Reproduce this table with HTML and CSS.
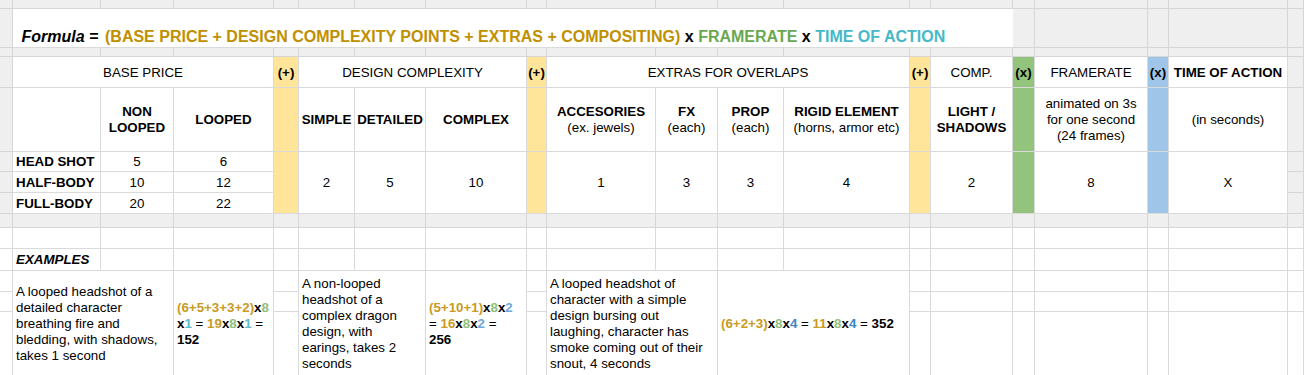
FILE: index.html
```html
<!DOCTYPE html>
<html lang="en">
<head>
<meta charset="utf-8">
<title>Pricing formula</title>
<link rel="stylesheet" href="styles.css">
</head>
<body>
<div class="sheet">
  <!-- row 1 -->
  <div class="c g"></div><div class="c g"></div><div class="c g"></div><div class="c g"></div><div class="c g"></div>
  <div class="c g"></div><div class="c g"></div><div class="c g"></div><div class="c g"></div><div class="c g"></div>
  <div class="c g"></div><div class="c g"></div><div class="c g"></div><div class="c g"></div><div class="c g"></div>
  <div class="c g"></div><div class="c g"></div><div class="c g"></div><div class="c g"></div><div class="c g"></div>
  <!-- row 2 -->
  <div class="c g"></div>
  <div class="c formula s14">
    <span class="f-label">Formula =</span>
    <span class="f-expr"><span class="gold">(BASE PRICE + DESIGN COMPLEXITY POINTS + EXTRAS + COMPOSITING)</span> x <span class="green">FRAMERATE</span> x <span class="teal">TIME OF ACTION</span></span>
  </div>
  <div class="c g"></div><div class="c g"></div><div class="c g"></div><div class="c g"></div><div class="c g"></div>
  <!-- row 3 band -->
  <div class="c g"></div><div class="c g"></div><div class="c g"></div><div class="c g"></div><div class="c g"></div>
  <div class="c g"></div><div class="c g"></div><div class="c g"></div><div class="c g"></div><div class="c g"></div>
  <div class="c g"></div><div class="c g"></div><div class="c g"></div><div class="c g"></div><div class="c g"></div>
  <div class="c g"></div><div class="c g"></div><div class="c g"></div><div class="c g"></div><div class="c g"></div>
  <!-- row 4 -->
  <div class="c g"></div>
  <div class="c s3 hd">BASE PRICE</div>
  <div class="c y b hd">(+)</div>
  <div class="c s3 hd">DESIGN COMPLEXITY</div>
  <div class="c y b hd">(+)</div>
  <div class="c s4 hd">EXTRAS FOR OVERLAPS</div>
  <div class="c y b hd">(+)</div>
  <div class="c hd">COMP.</div>
  <div class="c gr b hd">(x)</div>
  <div class="c hd">FRAMERATE</div>
  <div class="c bl b hd">(x)</div>
  <div class="c b hd">TIME OF ACTION</div>
  <div class="c g"></div>
  <!-- row 5 -->
  <div class="c g"></div>
  <div class="c"></div>
  <div class="c b"><span class="t">NON<br>LOOPED</span></div>
  <div class="c b">LOOPED</div>
  <div class="c y"></div>
  <div class="c b">SIMPLE</div>
  <div class="c b">DETAILED</div>
  <div class="c b">COMPLEX</div>
  <div class="c y"></div>
  <div class="c"><span class="t"><b>ACCESORIES</b><br>(ex. jewels)</span></div>
  <div class="c"><span class="t"><b>FX</b><br>(each)</span></div>
  <div class="c"><span class="t"><b>PROP</b><br>(each)</span></div>
  <div class="c"><span class="t"><b>RIGID ELEMENT</b><br>(horns, armor etc)</span></div>
  <div class="c y"></div>
  <div class="c b"><span class="t">LIGHT /<br>SHADOWS</span></div>
  <div class="c gr"></div>
  <div class="c"><span class="t">animated on 3s<br>for one second<br>(24 frames)</span></div>
  <div class="c bl"></div>
  <div class="c">(in seconds)</div>
  <div class="c g"></div>
  <!-- row 6 -->
  <div class="c g"></div>
  <div class="c lbl b">HEAD SHOT</div>
  <div class="c">5</div>
  <div class="c">6</div>
  <div class="c y r3"></div>
  <div class="c r3">2</div>
  <div class="c r3">5</div>
  <div class="c r3">10</div>
  <div class="c y r3"></div>
  <div class="c r3">1</div>
  <div class="c r3">3</div>
  <div class="c r3">3</div>
  <div class="c r3">4</div>
  <div class="c y r3"></div>
  <div class="c r3">2</div>
  <div class="c gr r3"></div>
  <div class="c r3">8</div>
  <div class="c bl r3"></div>
  <div class="c r3">X</div>
  <div class="c g"></div>
  <!-- row 7 -->
  <div class="c g"></div>
  <div class="c lbl b">HALF-BODY</div>
  <div class="c">10</div>
  <div class="c">12</div>
  <div class="c g"></div>
  <!-- row 8 -->
  <div class="c g"></div>
  <div class="c lbl b">FULL-BODY</div>
  <div class="c">20</div>
  <div class="c">22</div>
  <div class="c g"></div>
  <!-- row 9 band -->
  <div class="c g"></div><div class="c g"></div><div class="c g"></div><div class="c g"></div><div class="c g"></div>
  <div class="c g"></div><div class="c g"></div><div class="c g"></div><div class="c g"></div><div class="c g"></div>
  <div class="c g"></div><div class="c g"></div><div class="c g"></div><div class="c g"></div><div class="c g"></div>
  <div class="c g"></div><div class="c g"></div><div class="c g"></div><div class="c g"></div><div class="c g"></div>
  <!-- row 10 -->
  <div class="c"></div><div class="c"></div><div class="c"></div><div class="c"></div><div class="c"></div>
  <div class="c"></div><div class="c"></div><div class="c"></div><div class="c"></div><div class="c"></div>
  <div class="c"></div><div class="c"></div><div class="c"></div><div class="c"></div><div class="c"></div>
  <div class="c"></div><div class="c"></div><div class="c"></div><div class="c"></div><div class="c"></div>
  <!-- row 11 -->
  <div class="c"></div>
  <div class="c lbl bi">EXAMPLES</div>
  <div class="c"></div><div class="c"></div><div class="c"></div><div class="c"></div><div class="c"></div><div class="c"></div>
  <div class="c"></div><div class="c"></div><div class="c"></div><div class="c"></div><div class="c"></div><div class="c"></div>
  <div class="c"></div><div class="c"></div><div class="c"></div><div class="c"></div><div class="c"></div><div class="c"></div>
  <!-- row 12 -->
  <div class="c"></div>
  <div class="c ex s2 r3"><span class="t">A looped headshot of a<br>detailed character<br>breathing fire and<br>bledding, with shadows,<br>takes 1 second</span></div>
  <div class="c ex r3"><span class="calc"><span class="gold">(6+5+3+3+2)</span>x<span class="lgreen">8</span><br>x<span class="teal">1</span><span class="n"> = </span><span class="gold">19</span>x<span class="lgreen">8</span>x<span class="teal">1</span><span class="n"> =</span><br>152</span></div>
  <div class="c"></div>
  <div class="c ex s2 r3"><span class="t">A non-looped<br>headshot of a<br>complex dragon<br>design, with<br>earings, takes 2<br>seconds</span></div>
  <div class="c ex r3"><span class="calc"><span class="gold">(5+10+1)</span>x<span class="lgreen">8</span>x<span class="lblue">2</span><br><span class="n">= </span><span class="gold">16</span>x<span class="lgreen">8</span>x<span class="lblue">2</span><span class="n"> =</span><br>256</span></div>
  <div class="c"></div>
  <div class="c ex s2 r3"><span class="t">A looped headshot of<br>character with a simple<br>design bursing out<br>laughing, character has<br>smoke coming out of their<br>snout, 4 seconds</span></div>
  <div class="c ex s2 r3"><span class="calc"><span class="gold">(6+2+3)</span>x<span class="lgreen">8</span>x<span class="blue">4</span><span class="n"> = </span><span class="gold">11</span>x<span class="lgreen">8</span>x<span class="blue">4</span><span class="n"> = </span>352</span></div>
  <div class="c"></div><div class="c"></div><div class="c"></div><div class="c"></div><div class="c"></div><div class="c"></div><div class="c"></div>
  <!-- row 13 -->
  <div class="c"></div><div class="c"></div><div class="c"></div>
  <div class="c"></div><div class="c"></div><div class="c"></div><div class="c"></div><div class="c"></div><div class="c"></div><div class="c"></div>
  <!-- row 14 -->
  <div class="c"></div><div class="c"></div><div class="c"></div>
  <div class="c"></div><div class="c"></div><div class="c"></div><div class="c"></div><div class="c"></div><div class="c"></div><div class="c"></div>
</div>
</body>
</html>
```

FILE: styles.css
```css
html, body {
  margin: 0;
  padding: 0;
  background: #ffffff;
}

body {
  width: 1304px;
  height: 375px;
  overflow: hidden;
  font-family: "Liberation Sans", Arial, sans-serif;
  color: #000000;
}

.sheet {
  display: grid;
  grid-template-columns: 13px 88px 73px 100px 25px 56px 71px 101px 20px 109px 62px 66px 126px 21px 82px 22px 113px 21px 119px 16px;
  grid-template-rows: 9px 39px 9px 31px 64px 20px 21px 21px 14px 21px 22px 21px 20px 64px;
  width: 1304px;
}

.c {
  box-sizing: border-box;
  border-right: 1px solid #dadada;
  border-bottom: 1px solid #dadada;
  background: #ffffff;
  font-size: 13.333px;
  line-height: 16px;
  padding-top: 1px;
  display: flex;
  align-items: center;
  justify-content: center;
  text-align: center;
  white-space: nowrap;
  overflow: hidden;
}

.hd { padding-top: 2px; }

.t { display: block; }

.g { background: #efefef; border-color: #d6d6d6; }
.y { background: #ffe599; }
.gr { background: #93c47d; }
.bl { background: #9fc5e8; }

.b { font-weight: bold; }
.bi { font-weight: bold; font-style: italic; }

.s2 { grid-column: span 2; }
.s3 { grid-column: span 3; }
.s4 { grid-column: span 4; }
.s14 { grid-column: span 14; }
.r3 { grid-row: span 3; }

.lbl {
  justify-content: flex-start;
  text-align: left;
  padding-left: 3px;
}

.formula {
  justify-content: flex-start;
  align-items: flex-end;
  padding-top: 0;
  padding-bottom: 1px;
  font-size: 16px;
  line-height: 18px;
  font-weight: bold;
  border-right: none;
}

.f-label {
  width: 88px;
  box-sizing: border-box;
  padding-left: 6px;
  font-style: italic;
}

.f-expr {
  padding-left: 4px;
}

.ex {
  justify-content: flex-start;
  text-align: left;
  padding-left: 3px;
}

.calc { display: block; font-weight: bold; }
.calc .n { font-weight: normal; }

.gold { color: #bf9000; }
.green { color: #6aa84f; }
.teal { color: #45b9c7; }
.lgreen { color: #8fbf79; }
.lblue { color: #6fa8dc; }
.blue { color: #3d85c6; }
.calc .gold { color: #c99a24; }
.calc .teal { color: #5bbccb; }
```
